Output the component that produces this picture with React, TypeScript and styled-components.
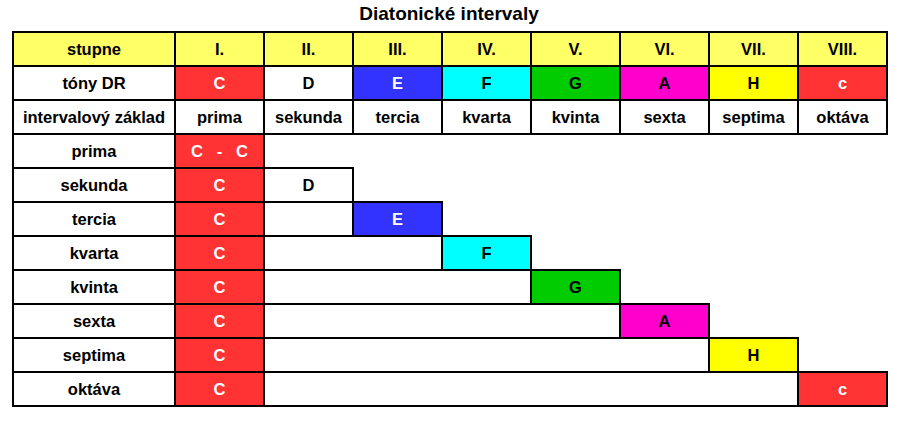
import styled, { createGlobalStyle } from "styled-components";

// Barvy tónů diatonické řady
const RED = "#ff3333";
const BLUE = "#3333ff";
const CYAN = "#00ffff";
const GREEN = "#00cc00";
const MAGENTA = "#ff00cc";
const YELLOW = "#ffff00";

interface Tone {
  name: string;
  bg: string;
  light: boolean;
}

const degrees = ["I.", "II.", "III.", "IV.", "V.", "VI.", "VII.", "VIII."];

const tones: Tone[] = [
  { name: "C", bg: RED, light: true },
  { name: "D", bg: "#ffffff", light: false },
  { name: "E", bg: BLUE, light: true },
  { name: "F", bg: CYAN, light: false },
  { name: "G", bg: GREEN, light: false },
  { name: "A", bg: MAGENTA, light: false },
  { name: "H", bg: YELLOW, light: false },
  { name: "c", bg: RED, light: true },
];

const intervals = ["prima", "sekunda", "tercia", "kvarta", "kvinta", "sexta", "septima", "oktáva"];

export default function App() {
  return (
    <>
      <GlobalStyle />
      <Page>
        <Title>Diatonické intervaly</Title>
        <Table>
          <colgroup>
            <col style={{ width: 162 }} />
            {degrees.map((d) => (
              <col key={d} style={{ width: 89 }} />
            ))}
          </colgroup>
          <tbody>
            <tr>
              <Cell $bg="#ffff66">stupne</Cell>
              {degrees.map((d) => (
                <Cell key={d} $bg="#ffff66">
                  {d}
                </Cell>
              ))}
            </tr>
            <tr>
              <Cell>tóny DR</Cell>
              {tones.map((t) => (
                <Cell key={t.name} $bg={t.bg} $light={t.light}>
                  {t.name}
                </Cell>
              ))}
            </tr>
            <tr>
              <Cell>intervalový základ</Cell>
              {intervals.map((i) => (
                <Cell key={i}>{i}</Cell>
              ))}
            </tr>
            {intervals.map((name, k) => (
              <tr key={name}>
                <Cell>{name}</Cell>
                <Cell $bg={RED} $light>
                  {k === 0 ? <Pre>C   -   C</Pre> : "C"}
                </Cell>
                {k >= 2 && <Cell colSpan={k - 1} />}
                {k >= 1 && (
                  <Cell $bg={tones[k].bg} $light={tones[k].light}>
                    {tones[k].name}
                  </Cell>
                )}
              </tr>
            ))}
          </tbody>
        </Table>
      </Page>
    </>
  );
}

const GlobalStyle = createGlobalStyle`
  body {
    margin: 0;
    background: #fff;
    font-family: "Liberation Sans", Arial, sans-serif;
  }
`;

const Page = styled.div`
  width: 899px;
  padding: 3px 0 0 12px;
  box-sizing: border-box;
`;

const Title = styled.h1`
  width: 874px;
  margin: 0 0 6px;
  text-align: center;
  font-size: 19px;
  line-height: 22px;
  font-weight: bold;
  color: #000;
`;

const Table = styled.table`
  width: 874px;
  table-layout: fixed;
  border-collapse: collapse;
`;

const Cell = styled.td<{ $bg?: string; $light?: boolean }>`
  height: 32px;
  padding: 0;
  border: 2px solid #000;
  background: ${(p) => p.$bg ?? "#fff"};
  color: ${(p) => (p.$light ? "#fff" : "#000")};
  text-align: center;
  vertical-align: middle;
  font-size: 16.5px;
  font-weight: bold;
  white-space: nowrap;
`;

const Pre = styled.span`
  white-space: pre;
`;
